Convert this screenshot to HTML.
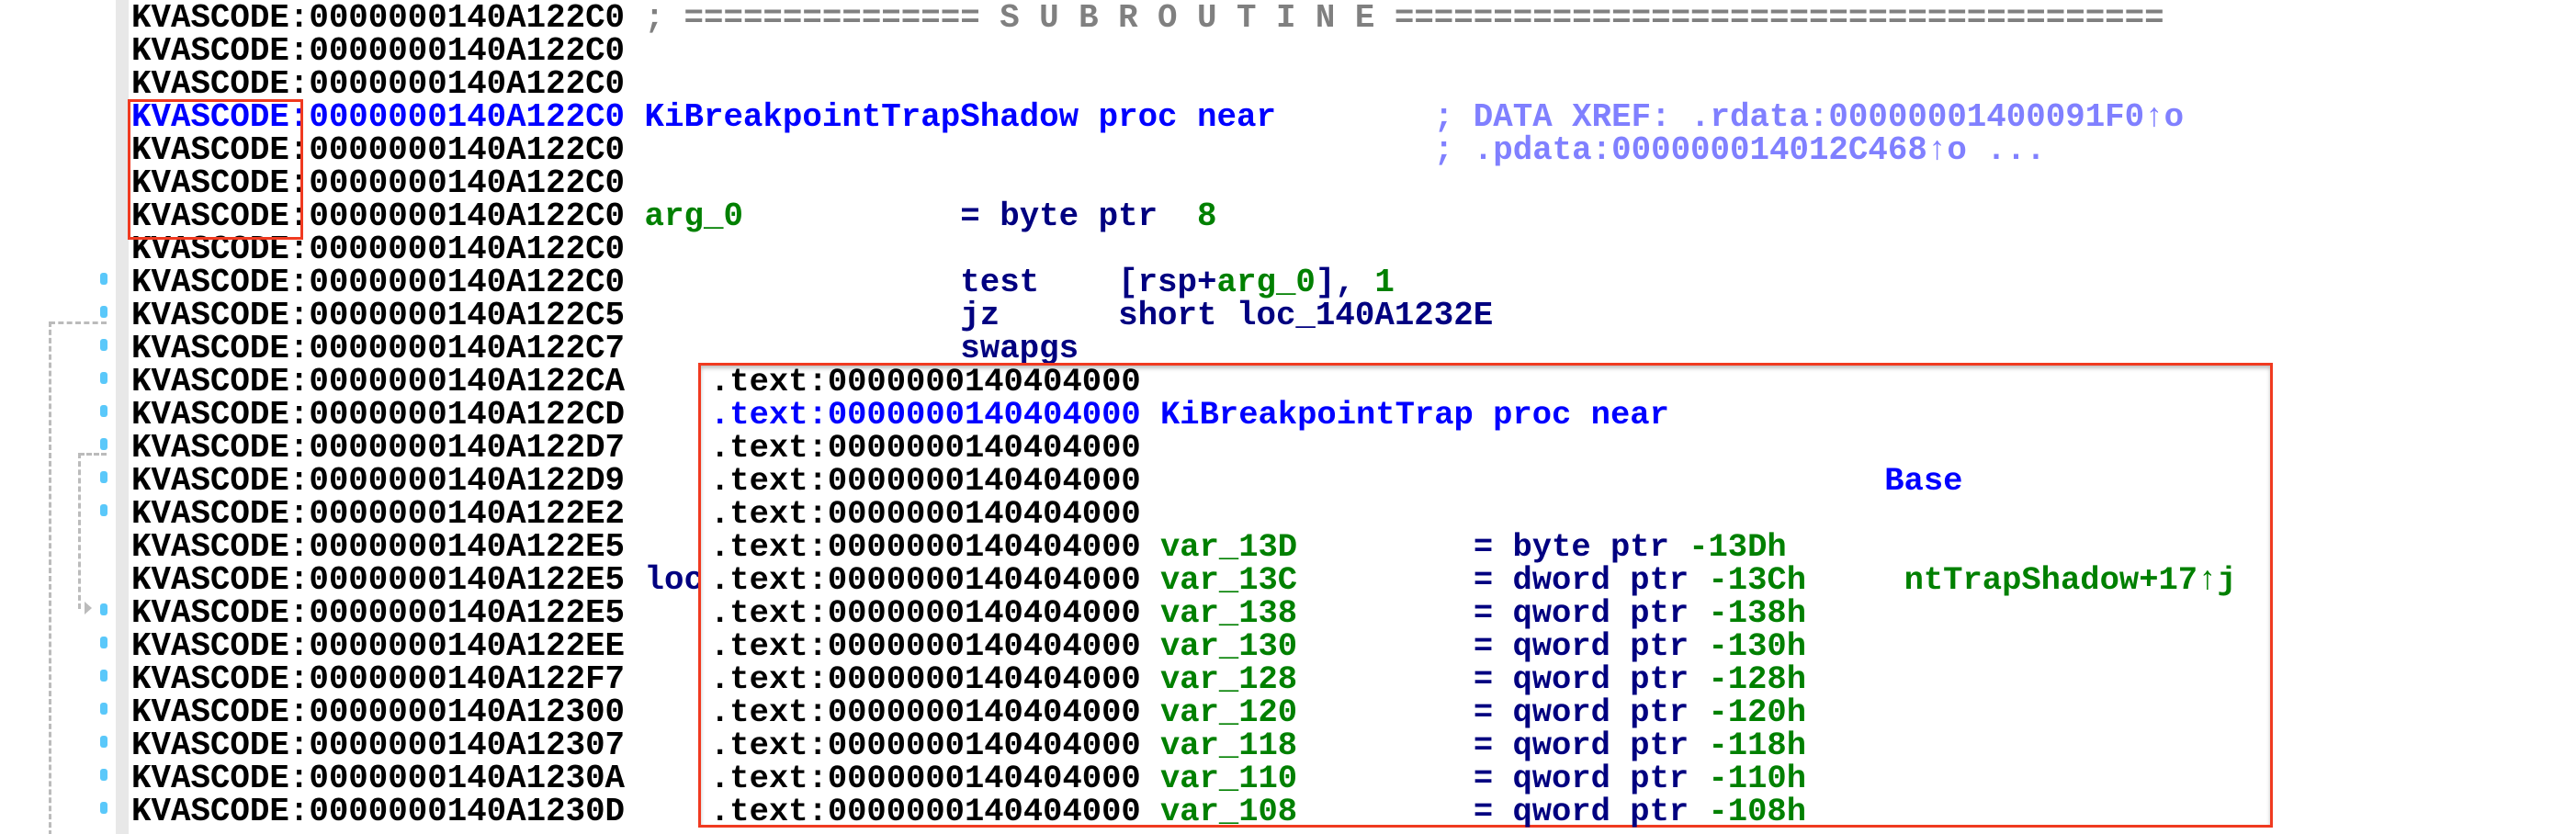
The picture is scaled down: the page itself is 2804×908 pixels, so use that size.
<!DOCTYPE html>
<html><head><meta charset="utf-8"><style>
html,body{margin:0;padding:0;background:#fff;width:2804px;height:908px;overflow:hidden;position:relative}
.r{position:absolute;left:143px;height:36px;line-height:36px;white-space:pre;font-family:"Liberation Mono",monospace;font-weight:bold;font-size:35.8px;letter-spacing:0px;color:#000}
.g{color:#808080}.b{color:#0000ff}.n{color:#000080}.gr{color:#008000}.lb{color:#8080ff}
.gut{position:absolute;left:126px;top:0;width:14px;height:908px;background:#e8e8e8}
.dot{position:absolute;left:109px;width:8px;height:13px;border-radius:3px;background:#5ac8fa}
.box{position:absolute;left:760px;top:395px;width:1708px;height:500px;border:3px solid #f03a20;background:#fff;box-shadow:0 3px 4px rgba(0,0,0,.25) inset}
.bx{position:absolute;left:10px;height:36px;line-height:36px;white-space:pre;font-family:"Liberation Mono",monospace;font-weight:bold;font-size:35.5px;letter-spacing:0px;color:#000}
</style></head><body>
<div class="gut"></div>
<div style="position:absolute;left:54px;top:350px;width:62px;height:0;border-top:3px dashed #bbb"></div>
<div style="position:absolute;left:53px;top:350px;width:0;height:560px;border-left:3px dashed #bbb"></div>
<div style="position:absolute;left:86px;top:493px;width:30px;height:0;border-top:3px dashed #bbb"></div>
<div style="position:absolute;left:85px;top:493px;width:0;height:170px;border-left:3px dashed #bbb"></div>
<div style="position:absolute;left:92px;top:655px;width:0;height:0;border-top:7px solid transparent;border-bottom:7px solid transparent;border-left:8px solid #bbb"></div>

<div class="r" style="top:2px">KVASCODE:0000000140A122C0 <span class="g">; =============== S U B R O U T I N E =======================================</span></div>
<div class="r" style="top:38px">KVASCODE:0000000140A122C0</div>
<div class="r" style="top:74px">KVASCODE:0000000140A122C0</div>
<div class="r b" style="top:110px">KVASCODE:0000000140A122C0 KiBreakpointTrapShadow proc near        <span class="lb">; DATA XREF: .rdata:00000001400091F0↑o</span></div>
<div class="r" style="top:146px">KVASCODE:0000000140A122C0                                         <span class="lb">; .pdata:000000014012C468↑o ...</span></div>
<div class="r" style="top:182px">KVASCODE:0000000140A122C0</div>
<div class="r" style="top:218px">KVASCODE:0000000140A122C0 <span class="gr">arg_0</span>           <span class="n">= byte ptr  </span><span class="gr">8</span></div>
<div class="r" style="top:254px">KVASCODE:0000000140A122C0</div>
<div class="r" style="top:290px">KVASCODE:0000000140A122C0                 <span class="n">test    [rsp+</span><span class="gr">arg_0</span><span class="n">], </span><span class="gr">1</span></div>
<div class="r" style="top:326px">KVASCODE:0000000140A122C5                 <span class="n">jz      short loc_140A1232E</span></div>
<div class="r" style="top:362px">KVASCODE:0000000140A122C7                 <span class="n">swapgs</span></div>
<div class="r" style="top:398px">KVASCODE:0000000140A122CA</div>
<div class="r" style="top:434px">KVASCODE:0000000140A122CD</div>
<div class="r" style="top:470px">KVASCODE:0000000140A122D7</div>
<div class="r" style="top:506px">KVASCODE:0000000140A122D9</div>
<div class="r" style="top:542px">KVASCODE:0000000140A122E2</div>
<div class="r" style="top:578px">KVASCODE:0000000140A122E5</div>
<div class="r" style="top:614px">KVASCODE:0000000140A122E5 <span class="n">loc</span></div>
<div class="r" style="top:650px">KVASCODE:0000000140A122E5</div>
<div class="r" style="top:686px">KVASCODE:0000000140A122EE</div>
<div class="r" style="top:722px">KVASCODE:0000000140A122F7</div>
<div class="r" style="top:758px">KVASCODE:0000000140A12300</div>
<div class="r" style="top:794px">KVASCODE:0000000140A12307</div>
<div class="r" style="top:830px">KVASCODE:0000000140A1230A</div>
<div class="r" style="top:866px">KVASCODE:0000000140A1230D</div>

<div class="dot" style="top:297px"></div><div class="dot" style="top:333px"></div><div class="dot" style="top:369px"></div><div class="dot" style="top:405px"></div><div class="dot" style="top:441px"></div><div class="dot" style="top:477px"></div><div class="dot" style="top:513px"></div><div class="dot" style="top:549px"></div><div class="dot" style="top:657px"></div><div class="dot" style="top:693px"></div><div class="dot" style="top:729px"></div><div class="dot" style="top:765px"></div><div class="dot" style="top:801px"></div><div class="dot" style="top:837px"></div><div class="dot" style="top:873px"></div>

<div style="position:absolute;left:139px;top:108px;width:185px;height:147px;border:3px solid #f03a20"></div>

<div class="box">
<div class="bx" style="top:0px">.text:0000000140404000</div>
<div class="bx" style="top:36px;color:#0000ff">.text:0000000140404000 KiBreakpointTrap proc near</div>
<div class="bx" style="top:72px">.text:0000000140404000</div>
<div class="bx" style="top:108px">.text:0000000140404000                                      <span class="b">Base</span></div>
<div class="bx" style="top:144px">.text:0000000140404000</div>
<div class="bx" style="top:180px">.text:0000000140404000 <span class="gr">var_13D</span>         <span class="n">= byte ptr </span><span class="gr">-13Dh</span></div>
<div class="bx" style="top:216px">.text:0000000140404000 <span class="gr">var_13C</span>         <span class="n">= dword ptr </span><span class="gr">-13Ch</span>     <span class="gr">ntTrapShadow+17↑j</span></div>
<div class="bx" style="top:252px">.text:0000000140404000 <span class="gr">var_138</span>         <span class="n">= qword ptr </span><span class="gr">-138h</span></div>
<div class="bx" style="top:288px">.text:0000000140404000 <span class="gr">var_130</span>         <span class="n">= qword ptr </span><span class="gr">-130h</span></div>
<div class="bx" style="top:324px">.text:0000000140404000 <span class="gr">var_128</span>         <span class="n">= qword ptr </span><span class="gr">-128h</span></div>
<div class="bx" style="top:360px">.text:0000000140404000 <span class="gr">var_120</span>         <span class="n">= qword ptr </span><span class="gr">-120h</span></div>
<div class="bx" style="top:396px">.text:0000000140404000 <span class="gr">var_118</span>         <span class="n">= qword ptr </span><span class="gr">-118h</span></div>
<div class="bx" style="top:432px">.text:0000000140404000 <span class="gr">var_110</span>         <span class="n">= qword ptr </span><span class="gr">-110h</span></div>
<div class="bx" style="top:468px">.text:0000000140404000 <span class="gr">var_108</span>         <span class="n">= qword ptr </span><span class="gr">-108h</span></div>
</div>
</body></html>
